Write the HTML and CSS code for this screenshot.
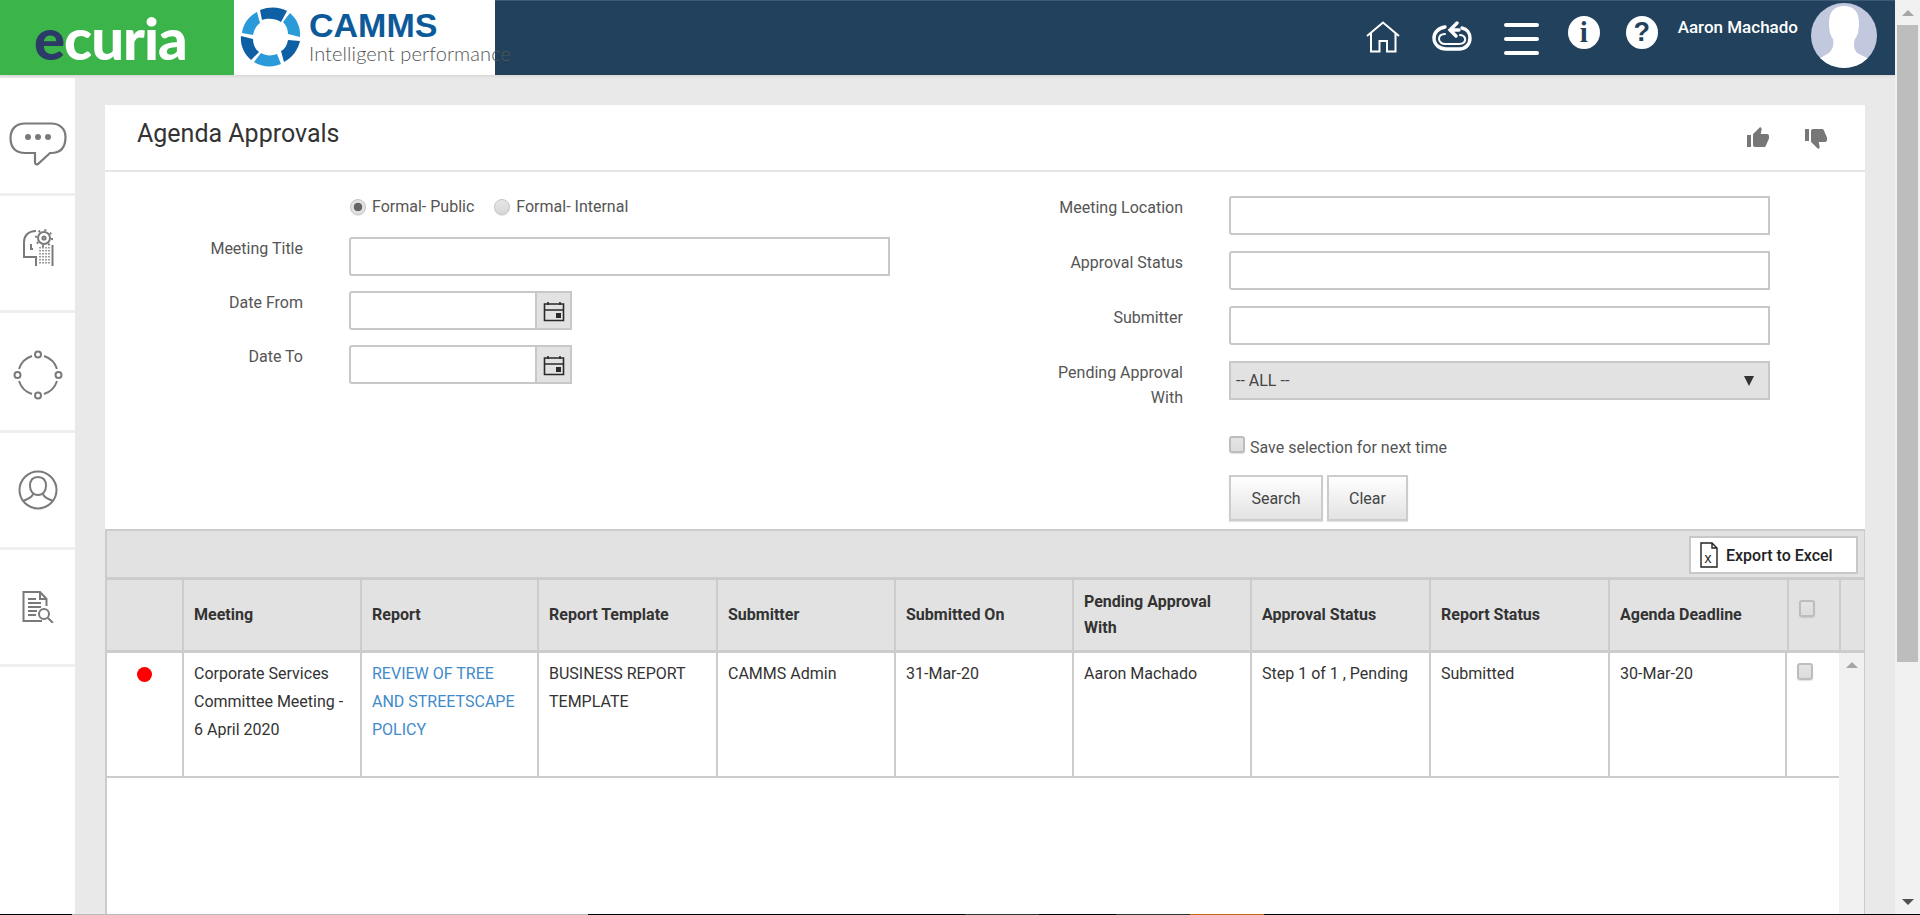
FILE: index.html
```html
<!DOCTYPE html>
<html lang="en">
<head>
    <meta charset="UTF-8">
    <meta name="viewport" content="width=device-width, initial-scale=1.0">
    <title>Agenda Approvals</title>
    <link rel="stylesheet" href="styles.css">
</head>
<body>
    <div class="page">
        <header class="topbar">
            <div class="brand-ecuria"><span class="brand-e">e</span>curia</div>
            <div class="brand-camms">
                <svg class="camms-swirl" viewBox="0 0 62 62">
                    <g id="blades">
                        <path class="blade-dark" d="M20 3 C30 -1 40 0 47 4 L41 15 C35 11 27 11 22 13 Z"/>
                        <path class="blade-light" d="M50 6 C57 12 61 21 60 30 L48 27 C48 22 46 18 43 15 Z"/>
                        <path class="blade-dark" d="M60 34 C58 43 52 51 44 55 L41 44 C45 42 47 38 48 33 Z"/>
                        <path class="blade-light" d="M41 57 C32 61 22 60 14 55 L21 46 C26 49 32 49 37 47 Z"/>
                        <path class="blade-dark" d="M11 53 C4 47 0 38 1 29 L13 32 C13 37 15 42 19 45 Z"/>
                        <path class="blade-light" d="M2 26 C3 17 9 9 17 5 L20 16 C16 19 14 23 13 28 Z"/>
                    </g>
                </svg>
                <div class="camms-text">
                    <div class="camms-name">CAMMS</div>
                    <div class="camms-tag">Intelligent performance</div>
                </div>
            </div>
            <nav class="topnav">
                <svg class="icon-home" viewBox="0 0 34 32">
                    <path d="M1 15 L17 1.5 L33 15 M5 12 V30.5 H13.5 V20 H21 V30.5 H29.5 V12"/>
                </svg>
                <svg class="icon-cloud" viewBox="0 0 40 30">
                    <path d="M13 6 C6 7 2 12 2 17 C2 24 8 28 14 28 H27 C34 28 38 23 38 17 C38 12 35 8 30 7"/>
                    <path class="thin" d="M13 13 C9 13 7 15 7 18 C7 21 10 23 13 23 H27 C31 23 34 21 33 17 C32 15 30 14 28 14"/>
                    <path d="M25 2 L18 9 L24 15 M19 9 H27"/>
                </svg>
                <div class="hamburger"><span></span><span></span><span></span></div>
                <div class="round-icon round-info">i</div>
                <div class="round-icon round-help">?</div>
                <div class="user-name">Aaron Machado</div>
                <div class="avatar">
                    <svg viewBox="0 0 66 65">
                        <path d="M33 3 C24 3 18 8 18 20 C18 27 19 32 22 36 C23 42 22 46 18 50 L6 57 L6 66 H60 V57 L46 50 C43 46 42 42 44 36 C47 32 48 27 48 20 C48 8 42 3 33 3Z"/>
                    </svg>
                </div>
            </nav>
        </header>

        <div class="content-wrap">
            <aside class="sidebar">
                <div class="side-item side-first">
                    <svg class="icon-chat" viewBox="0 0 58 44">
                        <path d="M16 1.5 H42 C51 1.5 56.5 7 56.5 15 C56.5 26 51 31 42 31 H41 L29 42 C27 43 26 42 26 40 V31 H16 C7 31 1.5 26 1.5 16 C1.5 7 7 1.5 16 1.5Z"/>
                        <circle class="fill" cx="19" cy="15" r="3"/>
                        <circle class="fill" cx="29" cy="15" r="3"/>
                        <circle class="fill" cx="39" cy="15" r="3"/>
                    </svg>
                </div>
                <div class="side-item">
                    <svg class="icon-head" viewBox="0 0 32 38">
                        <path d="M14 2 C6 2 2 7 2 13 V28 H14 V37"/>
                        <path d="M9 15 V20 H11"/>
                        <circle cx="22" cy="9" r="6"/>
                        <circle cx="22" cy="9" r="1.6"/>
                        <circle class="dash-ring" cx="22" cy="9" r="8"/>
                        <path class="dots" d="M18 18 V36 M21 18 V36 M24 18 V36 M27 18 V36"/>
                        <path d="M30.5 16 V37"/>
                    </svg>
                </div>
                <div class="side-item">
                    <svg class="icon-ring" viewBox="0 0 50 50">
                        <circle cx="25" cy="4.5" r="3"/>
                        <circle cx="45.5" cy="25" r="3"/>
                        <circle cx="25" cy="45.5" r="3"/>
                        <circle cx="4.5" cy="25" r="3"/>
                        <path d="M31 6 A20 20 0 0 1 44 19 M44 31 A20 20 0 0 1 31 44 M19 44 A20 20 0 0 1 6 31 M6 19 A20 20 0 0 1 19 6"/>
                    </svg>
                </div>
                <div class="side-item">
                    <svg class="icon-person" viewBox="0 0 40 40">
                        <circle cx="20" cy="20" r="18.5"/>
                        <path d="M20 7 C14 7 12 11 12 16 C12 21 15 25 20 25 C25 25 28 21 28 16 C28 11 26 7 20 7Z"/>
                        <path d="M15 24 C14 28 9 29 5 31 M25 24 C26 28 31 29 35 31"/>
                    </svg>
                </div>
                <div class="side-item">
                    <svg class="icon-doc" viewBox="0 0 32 32">
                        <path d="M20 30 H1.5 V1 H18 L24.5 8 V15 M18 1 V8 H24.5"/>
                        <path d="M6 8 H14 M6 12 H19 M6 16 H19 M6 20 H15 M6 24 H14"/>
                        <circle cx="22" cy="23" r="5"/>
                        <path d="M26 27 L31 32"/>
                    </svg>
                </div>
            </aside>

            <main class="main">
                <div class="title-row">
                    <h1 class="page-title">Agenda Approvals</h1>
                    <div class="title-actions">
                        <svg class="icon-thumb" viewBox="0 0 24 24">
                            <path d="M1 21h4V9H1v12zm22-11c0-1.1-.9-2-2-2h-6.31l.95-4.57.03-.32c0-.41-.17-.79-.44-1.06L14.17 1 7.59 7.59C7.22 7.95 7 8.45 7 9v10c0 1.1.9 2 2 2h9c.83 0 1.54-.5 1.84-1.22l3.02-7.05c.09-.23.14-.47.14-.73v-2z"/>
                        </svg>
                        <svg class="icon-thumb" viewBox="0 0 24 24">
                            <path transform="matrix(-1 0 0 1 24 0)" d="M15 3H6c-.83 0-1.54.5-1.84 1.22l-3.02 7.05c-.09.23-.14.47-.14.73v2c0 1.1.9 2 2 2h6.31l-.95 4.57-.03.32c0 .41.17.79.44 1.06L9.83 23l6.59-6.59c.36-.36.58-.86.58-1.41V5c0-1.1-.9-2-2-2zm4 0v12h4V3h-4z"/>
                        </svg>
                    </div>
                </div>

                <form class="search-form">
                    <div class="form-left">
                        <div class="radio-row">
                            <label class="radio-label"><input type="radio" name="kind" checked> Formal- Public</label>
                            <label class="radio-label"><input type="radio" name="kind"> Formal- Internal</label>
                        </div>
                        <div class="form-row">
                            <label class="field-label">Meeting Title</label>
                            <input class="text-field title-field" type="text">
                        </div>
                        <div class="form-row">
                            <label class="field-label">Date From</label>
                            <div class="date-field">
                                <input class="date-input" type="text">
                                <button class="date-btn" type="button">
                                    <svg class="icon-cal" viewBox="0 0 22 22"><path d="M1.5 4 H20.5 V20.5 H1.5 Z M1.5 10 H20.5"/><path class="cal-bit" d="M5 2 V5 M17 2 V5"/><rect class="cal-square" x="13" y="13" width="5" height="5"/></svg>
                                </button>
                            </div>
                        </div>
                        <div class="form-row">
                            <label class="field-label">Date To</label>
                            <div class="date-field">
                                <input class="date-input" type="text">
                                <button class="date-btn" type="button">
                                    <svg class="icon-cal" viewBox="0 0 22 22"><path d="M1.5 4 H20.5 V20.5 H1.5 Z M1.5 10 H20.5"/><path class="cal-bit" d="M5 2 V5 M17 2 V5"/><rect class="cal-square" x="13" y="13" width="5" height="5"/></svg>
                                </button>
                            </div>
                        </div>
                    </div>

                    <div class="form-right">
                        <div class="form-row">
                            <label class="field-label">Meeting Location</label>
                            <input class="text-field wide-field" type="text">
                        </div>
                        <div class="form-row">
                            <label class="field-label">Approval Status</label>
                            <input class="text-field wide-field" type="text">
                        </div>
                        <div class="form-row">
                            <label class="field-label">Submitter</label>
                            <input class="text-field wide-field" type="text">
                        </div>
                        <div class="form-row">
                            <label class="field-label">Pending Approval With</label>
                            <div class="select-field"><span>-- ALL --</span><span class="select-arrow"></span></div>
                        </div>
                        <label class="save-row"><input class="check" type="checkbox"> Save selection for next time</label>
                        <div class="form-buttons">
                            <button class="btn btn-search" type="button">Search</button>
                            <button class="btn btn-clear" type="button">Clear</button>
                        </div>
                    </div>
                </form>

                <div class="grid-panel">
                    <div class="grid-toolbar">
                        <button class="export-btn" type="button">
                            <svg class="icon-xls" viewBox="0 0 18 26">
                                <path d="M1 1 H12 L17 6 V25 H1 Z M12 1 V6 H17"/>
                                <text x="4.5" y="21" class="xls-letter">x</text>
                            </svg>
                            Export to Excel
                        </button>
                    </div>
                    <table class="grid-head">
                        <colgroup>
                            <col class="c1"><col class="c2"><col class="c3"><col class="c4"><col class="c5">
                            <col class="c6"><col class="c7"><col class="c8"><col class="c9"><col class="c10">
                            <col class="c11"><col>
                        </colgroup>
                        <tr>
                            <th></th>
                            <th>Meeting</th>
                            <th>Report</th>
                            <th>Report Template</th>
                            <th>Submitter</th>
                            <th>Submitted On</th>
                            <th>Pending Approval With</th>
                            <th>Approval Status</th>
                            <th>Report Status</th>
                            <th>Agenda Deadline</th>
                            <th class="check-cell"><input class="check" type="checkbox"></th>
                            <th></th>
                        </tr>
                    </table>
                    <div class="grid-body">
                        <table class="grid-rows">
                            <colgroup>
                                <col class="c1"><col class="c2"><col class="c3"><col class="c4"><col class="c5">
                                <col class="c6"><col class="c7"><col class="c8"><col class="c9"><col class="c10b">
                                <col>
                            </colgroup>
                            <tr>
                                <td class="dot-cell"><span class="red-dot"></span></td>
                                <td>Corporate Services Committee Meeting - 6 April 2020</td>
                                <td><a class="report-link" href="#">REVIEW OF TREE AND STREETSCAPE POLICY</a></td>
                                <td>BUSINESS REPORT TEMPLATE</td>
                                <td>CAMMS Admin</td>
                                <td>31-Mar-20</td>
                                <td>Aaron Machado</td>
                                <td>Step 1 of 1 , Pending</td>
                                <td>Submitted</td>
                                <td>30-Mar-20</td>
                                <td class="check-cell"><input class="check" type="checkbox"></td>
                            </tr>
                        </table>
                        <div class="grid-scroll"><span class="tri-up tri-light"></span></div>
                    </div>
                </div>
            </main>
        </div>
    </div>

    <div class="scrollbar">
        <span class="tri-up tri-mid"></span>
        <div class="scroll-thumb"></div>
        <span class="tri-down"></span>
    </div>

    <div class="taskbar-edge">
        <span class="seg seg-a"></span><span class="seg seg-b"></span><span class="seg seg-c"></span>
        <span class="seg seg-d"></span><span class="seg seg-e"></span><span class="seg seg-d"></span>
        <span class="seg seg-f"></span><span class="seg seg-g"></span>
    </div>
</body>
</html>
```

FILE: styles.css
```css
* {
    box-sizing: border-box;
}

html, body {
    margin: 0;
    height: 100%;
    overflow: hidden;
}

body {
    display: flex;
    height: 915px;
    font-family: Roboto, "Liberation Sans", sans-serif;
    font-size: 16px;
    color: #333;
    background-color: #e9e9e9;
}

.page {
    flex: 1;
    min-width: 0;
    display: flex;
    flex-direction: column;
}

/* top bar */
.topbar {
    height: 75px;
    flex: none;
    display: flex;
    background-color: #21415c;
    border-top: 1px solid #3a5a75;
    box-shadow: 0 1px 3px rgba(0, 0, 0, 0.1);
}

.brand-ecuria {
    width: 234px;
    margin-top: -1px;
    padding: 2px 0 0 34px;
    background-color: #3bb44a;
    color: #fff;
    font-family: Lato, sans-serif;
    font-weight: 900;
    font-size: 58px;
    line-height: 72px;
    letter-spacing: -1px;
}

.brand-e {
    color: #2b3a67;
}

.brand-camms {
    width: 261px;
    margin-top: -1px;
    display: flex;
    align-items: center;
    gap: 7px;
    padding-left: 6px;
    background-color: #fff;
}

.camms-swirl {
    width: 62px;
    height: 62px;
    flex: none;
}

.blade-dark {
    fill: #0f5fa5;
}

.blade-light {
    fill: #2a9ad8;
}

.camms-name {
    font-family: "Liberation Sans", sans-serif;
    font-weight: bold;
    font-size: 34px;
    line-height: 30px;
    color: #0c5a9a;
}

.camms-tag {
    font-family: Lato, sans-serif;
    font-weight: 300;
    font-size: 20px;
    line-height: 26px;
    color: #555;
    white-space: nowrap;
    letter-spacing: 0.1px;
}

.topnav {
    flex: 1;
    display: flex;
    justify-content: flex-end;
    align-items: flex-start;
    padding-right: 18px;
}

.icon-home {
    width: 34px;
    height: 32px;
    margin-top: 20px;
    fill: none;
    stroke: #fff;
    stroke-width: 2;
}

.icon-cloud {
    width: 40px;
    height: 30px;
    margin: 20px 0 0 32px;
    fill: none;
    stroke: #fff;
    stroke-width: 3.4;
    stroke-linecap: round;
}

.icon-cloud .thin {
    stroke-width: 2;
}

.hamburger {
    width: 35px;
    margin: 22px 0 0 32px;
    display: flex;
    flex-direction: column;
    gap: 10px;
}

.hamburger span {
    height: 4px;
    border-radius: 2px;
    background-color: #fff;
}

.round-icon {
    width: 32px;
    height: 33px;
    border-radius: 50%;
    background-color: #fff;
    color: #21415c;
    display: flex;
    align-items: center;
    justify-content: center;
    font-weight: bold;
    margin-top: 15px;
}

.round-info {
    margin-left: 29px;
    font-family: "Liberation Serif", serif;
    font-size: 29px;
}

.round-help {
    margin-left: 26px;
    font-family: "Liberation Sans", sans-serif;
    font-size: 27px;
}

.user-name {
    margin: 15px 0 0 20px;
    color: #fff;
    font-weight: 500;
    font-size: 17px;
    line-height: 22px;
    white-space: nowrap;
}

.avatar {
    width: 66px;
    height: 65px;
    margin: 2px 0 0 13px;
    border-radius: 50%;
    overflow: hidden;
    background-color: #c2c9de;
}

.avatar svg {
    display: block;
    width: 100%;
    height: 100%;
    fill: #fff;
}

/* left icon rail */
.content-wrap {
    flex: 1;
    min-height: 0;
    display: flex;
}

.sidebar {
    width: 75px;
    margin-top: 3px;
    flex: none;
    background-color: #fff;
}

.side-item {
    height: 117px;
    display: flex;
    align-items: center;
    justify-content: center;
    border-bottom: 3px solid #eef0f0;
}

.side-first {
    height: 118px;
    padding-top: 16px;
}

.side-item:nth-child(3) {
    height: 120px;
    padding-top: 6px;
}

.side-item svg {
    fill: none;
    stroke: #7a7a7a;
    stroke-width: 2;
}

.side-item .fill {
    fill: #7a7a7a;
    stroke: none;
}

.icon-chat {
    width: 58px;
    height: 44px;
}

.side-item .icon-chat {
    stroke-width: 2.2;
}

.icon-head {
    width: 32px;
    height: 38px;
    margin-top: -10px;
}

.icon-head .dots {
    stroke-dasharray: 1.5 1.5;
    stroke-width: 1.5;
}

.icon-head .dash-ring {
    stroke-dasharray: 2 4.3;
    stroke-width: 2;
}

.icon-ring {
    width: 50px;
    height: 50px;
}

.icon-person {
    width: 40px;
    height: 40px;
}

.icon-doc {
    width: 32px;
    height: 32px;
}

/* main column */
.main {
    flex: 1;
    min-width: 0;
    padding: 30px 30px 0;
    display: flex;
    flex-direction: column;
}

.title-row {
    height: 67px;
    flex: none;
    display: flex;
    justify-content: space-between;
    padding: 0 37px 0 31px;
    background-color: #fff;
    border-bottom: 2px solid #e6e6e6;
}

.page-title {
    margin: 14px 0 0 1px;
    font-size: 25px;
    line-height: 30px;
    font-weight: 400;
    color: #333;
}

.title-actions {
    display: flex;
    gap: 34px;
    padding-top: 21px;
}

.icon-thumb {
    width: 24px;
    height: 24px;
    fill: #777;
}

.search-form {
    flex: none;
    display: flex;
    padding: 24px 0 8px;
    background-color: #fff;
}

.form-left {
    width: 926px;
    flex: none;
    display: flex;
    flex-direction: column;
    gap: 15px;
}

.form-right {
    display: flex;
    flex-direction: column;
    gap: 16px;
}

.form-row {
    display: flex;
    gap: 46px;
}

.field-label {
    width: 198px;
    flex: none;
    text-align: right;
    color: #555;
    line-height: 25px;
    margin-top: -1px;
}

.form-right .field-label {
    width: 152px;
}

.radio-row {
    height: 22px;
    margin: 0 0 4px 349px;
    padding-left: 0;
    display: flex;
    gap: 19px;
    margin-left: 244px;
    line-height: 22px;
    color: #555;
}

.radio-label {
    display: flex;
    align-items: center;
    gap: 6px;
}

.radio-label input {
    appearance: none;
    width: 16px;
    height: 16px;
    margin: 0 0 0 1px;
    border-radius: 50%;
    border: 1px solid #c4c4c4;
    background: linear-gradient(#e6e6e6, #d8d8d8);
    box-shadow: 0 1px 1px rgba(0, 0, 0, 0.1);
}

.radio-label input:checked {
    background: radial-gradient(circle, #666 0, #666 4px, #e2e2e2 4.6px);
}

.text-field,
.date-input {
    height: 39px;
    border: 2px solid #c8c8c8;
    border-radius: 3px 0 0 3px;
    background-color: #fff;
    outline: none;
}

.title-field {
    width: 541px;
}

.wide-field {
    width: 541px;
}

.date-field {
    display: flex;
    width: 223px;
    height: 39px;
}

.date-input {
    flex: 1;
    min-width: 0;
    border-right: 0;
}

.date-btn {
    width: 37px;
    flex: none;
    padding: 0;
    display: flex;
    align-items: center;
    justify-content: center;
    background-color: #e2e2e2;
    border: 2px solid #c8c8c8;
}

.icon-cal {
    width: 22px;
    height: 22px;
    fill: none;
    stroke: #2a2a2a;
    stroke-width: 1.6;
}

.cal-square {
    fill: #2a2a2a;
    stroke: none;
}

.select-field {
    width: 541px;
    height: 39px;
    padding: 0 14px 0 5px;
    display: flex;
    align-items: center;
    justify-content: space-between;
    background-color: #e2e2e2;
    border: 2px solid #c8c8c8;
    color: #444;
}

.select-arrow {
    width: 0;
    height: 0;
    border-left: 5px solid transparent;
    border-right: 5px solid transparent;
    border-top: 10px solid #333;
}

.save-row {
    height: 24px;
    margin: 9px 0 0 198px;
    display: flex;
    align-items: center;
    gap: 5px;
    color: #555;
}

.check {
    appearance: none;
    width: 16px;
    height: 17px;
    margin: 0;
    flex: none;
    border: 2px solid #bdbdbd;
    border-radius: 3px;
    background: linear-gradient(#e4e4e4, #dcdcdc);
    box-shadow: 0 1px 1px rgba(0, 0, 0, 0.12);
}

.save-row .check {
    margin-top: -5px;
}

.form-buttons {
    margin: 0 0 0 198px;
    display: flex;
    gap: 4px;
}

.btn {
    height: 46px;
    padding: 0;
    border: 2px solid #ccc;
    background: linear-gradient(#fff, #e3e3e3);
    box-shadow: 0 1px 1px rgba(0, 0, 0, 0.1);
    font-family: Roboto, sans-serif;
    font-size: 16px;
    color: #444;
}

.btn-search {
    width: 94px;
}

.btn-clear {
    width: 81px;
}

/* results grid */
.grid-panel {
    flex: 1;
    min-height: 0;
    display: flex;
    flex-direction: column;
    border-left: 2px solid #ccc;
    border-right: 1px solid #ccc;
    background-color: #fff;
}

.grid-toolbar {
    height: 51px;
    flex: none;
    display: flex;
    justify-content: flex-end;
    align-items: flex-start;
    padding: 5px 6px 0 0;
    background-color: #e2e2e2;
    border-top: 2px solid #ccc;
    border-bottom: 3px solid #ccc;
}

.export-btn {
    width: 169px;
    height: 38px;
    padding: 0 0 0 9px;
    display: flex;
    align-items: center;
    gap: 8px;
    background-color: #fff;
    border: 2px solid #c8c8c8;
    font-family: Roboto, sans-serif;
    font-size: 16px;
    font-weight: 500;
    color: #222;
    white-space: nowrap;
}

.icon-xls {
    width: 18px;
    height: 26px;
    flex: none;
    fill: none;
    stroke: #222;
    stroke-width: 1.4;
}

.xls-letter {
    font-family: "Liberation Sans", sans-serif;
    font-size: 14px;
    fill: #222;
    stroke: none;
}

table {
    border-collapse: separate;
    border-spacing: 0;
    table-layout: fixed;
}

.c1 { width: 77px; }
.c2 { width: 178px; }
.c3 { width: 177px; }
.c4 { width: 179px; }
.c5 { width: 178px; }
.c6 { width: 178px; }
.c7 { width: 178px; }
.c8 { width: 179px; }
.c9 { width: 179px; }
.c10 { width: 179px; }
.c10b { width: 177px; }
.c11 { width: 52px; }

.grid-head {
    width: 100%;
    flex: none;
}

.grid-head th {
    height: 73px;
    padding: 0 10px;
    text-align: left;
    font-weight: 700;
    line-height: 26px;
    color: #333;
    background-color: #e2e2e2;
    border-right: 2px solid #ccc;
    border-bottom: 3px solid #ccc;
}

.grid-head th:last-child {
    border-right: 0;
}

.grid-body {
    flex: 1;
    min-height: 0;
    display: flex;
}

.grid-rows {
    width: 1732px;
    height: 125px;
    flex: none;
}

.grid-rows td {
    padding: 7px 10px 5px;
    vertical-align: top;
    line-height: 28px;
    color: #333;
    border-right: 2px solid #ccc;
    border-bottom: 2px solid #ccc;
}

.grid-rows td:last-child {
    border-right: 0;
}

.dot-cell {
    text-align: center;
}

.red-dot {
    display: inline-block;
    width: 15px;
    height: 15px;
    margin-top: 7px;
    border-radius: 50%;
    background-color: #f00;
    vertical-align: top;
}

.report-link {
    color: #428bca;
    text-decoration: none;
}

.check-cell {
    line-height: 0;
}

.grid-head .check-cell {
    padding-bottom: 6px;
}

.grid-rows .check-cell {
    padding-top: 8px;
}

.grid-scroll {
    flex: 1;
    padding-top: 9px;
    display: flex;
    justify-content: center;
    align-items: flex-start;
    background-color: #f1f1f1;
}

.tri-up {
    width: 0;
    height: 0;
    border-left: 6px solid transparent;
    border-right: 6px solid transparent;
    border-bottom: 6px solid #a6a6a6;
}

.tri-down {
    width: 0;
    height: 0;
    border-left: 6px solid transparent;
    border-right: 6px solid transparent;
    border-top: 6px solid #505050;
}

/* page scrollbar */
.scrollbar {
    width: 25px;
    flex: none;
    display: flex;
    flex-direction: column;
    align-items: center;
    padding: 10px 0 10px;
    background-color: #f1f1f1;
}

.scroll-thumb {
    width: 21px;
    height: 637px;
    margin: 9px 0 auto;
    background-color: #bdbdbd;
}

.taskbar-edge {
    position: fixed;
    left: 0;
    right: 0;
    bottom: 0;
    height: 1px;
    display: flex;
}

.seg-a { width: 72px; background-color: #000; }
.seg-b { width: 516px; background-color: #bbb; }
.seg-c { width: 377px; background-color: #000; }
.seg-d { width: 74px; background-color: #333; }
.seg-e { width: 77px; background-color: #000; }
.seg-f { width: 74px; background-color: #c4660f; }
.seg-g { flex: 1; background-color: #000; }
```
